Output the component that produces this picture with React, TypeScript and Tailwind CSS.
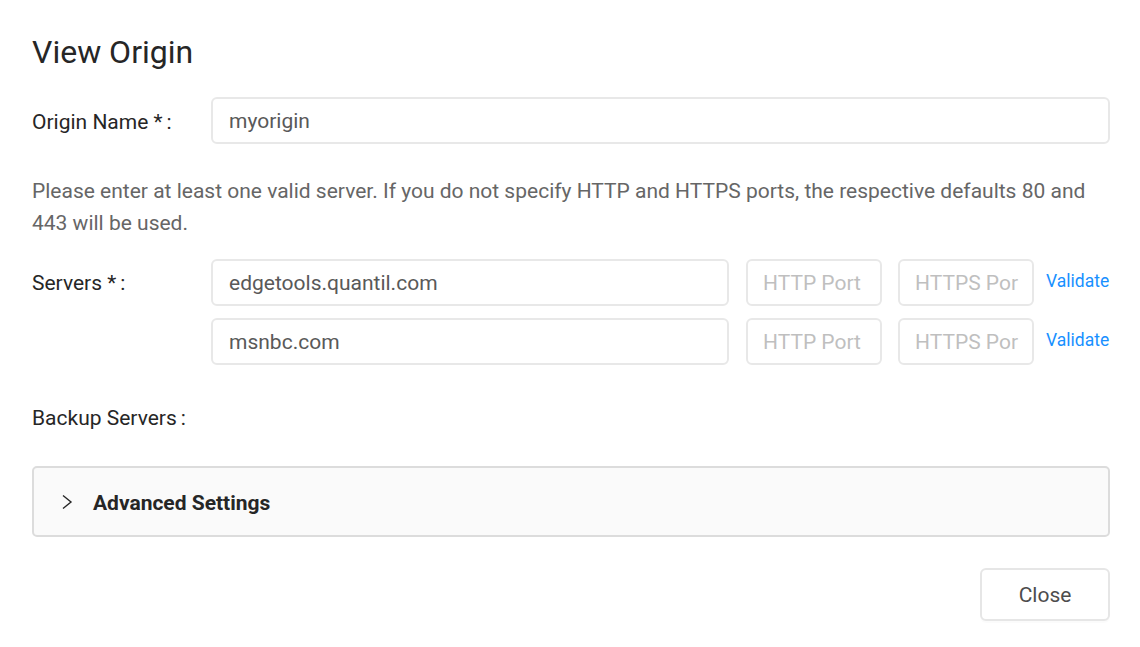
import React from "react";

const inputCls =
  "h-[47px] rounded-[6px] border-2 border-[#e8e8e8] bg-white px-[16px] pt-[2px] text-[21px] text-[#595959] flex items-center";

function PortBox({ text }: { text: string }) {
  return (
    <div className={`${inputCls} w-[136px] shrink-0 overflow-hidden whitespace-nowrap text-[#bfbfbf]`}>
      <span className="-ml-[1px]">{text}</span>
    </div>
  );
}

function ServerRow({ host }: { host: string }) {
  return (
    <div className="flex items-center">
      <div className={`${inputCls} w-[518px] shrink-0`}>{host}</div>
      <div className="ml-[17px]">
        <PortBox text="HTTP Port" />
      </div>
      <div className="ml-[16px]">
        <PortBox text="HTTPS Por" />
      </div>
      <div className="ml-[12px] text-[17.5px] text-[#1890ff] -mt-[2px]">Validate</div>
    </div>
  );
}

function Label({ text }: { text: string }) {
  return (
    <span className="text-[21px] text-[#262626] whitespace-nowrap">
      {text}
      <span className="ml-[4px]">:</span>
    </span>
  );
}

export default function App() {
  return (
    <div
      className="w-[1140px] h-[647px] bg-white pl-[32px] pr-[30px] text-[#262626]"
      style={{ fontFamily: "Roboto, 'Liberation Sans', sans-serif" }}
    >
      <h1 className="pt-[32px] text-[32px] leading-[40px] font-normal text-[#262626]">View Origin</h1>

      <div className="mt-[25px] flex items-center">
        <div className="w-[179px] shrink-0 pt-[4px]">
          <Label text="Origin Name *" />
        </div>
        <div className={`${inputCls} flex-1`}>myorigin</div>
      </div>

      <p className="mt-[32px] text-[21px] leading-[31.5px] text-[#666666]">
        Please enter at least one valid server. If you do not specify HTTP and HTTPS ports, the respective defaults 80 and
        443 will be used.
      </p>

      <div className="mt-[20px] flex">
        <div className="w-[179px] shrink-0 leading-[47px] mt-[1px]">
          <Label text="Servers *" />
        </div>
        <div className="flex flex-col gap-[12px]">
          <ServerRow host="edgetools.quantil.com" />
          <ServerRow host="msnbc.com" />
        </div>
      </div>

      <div className="mt-[39px] leading-[28px]">
        <Label text="Backup Servers" />
      </div>

      <div className="mt-[32px] h-[71px] rounded-[5px] border-2 border-[#dcdcdc] bg-[#fafafa] flex items-center pl-[27px]">
        <svg width="12" height="16" viewBox="0 0 12 16" className="shrink-0 mt-[1px]">
          <polyline points="2,1.5 10,8 2,14.5" fill="none" stroke="#262626" strokeWidth="1.4" />
        </svg>
        <span className="ml-[20px] mt-[4px] text-[21px] font-bold text-[#262626]">Advanced Settings</span>
      </div>

      <div className="mt-[31px] flex justify-end">
        <button className="h-[53px] w-[130px] rounded-[6px] border-2 border-[#e6e6e6] bg-white pt-[3px] text-[21px] text-[#4d4d4d] shadow-[0_2px_0_rgba(0,0,0,0.015)]">
          Close
        </button>
      </div>
    </div>
  );
}
